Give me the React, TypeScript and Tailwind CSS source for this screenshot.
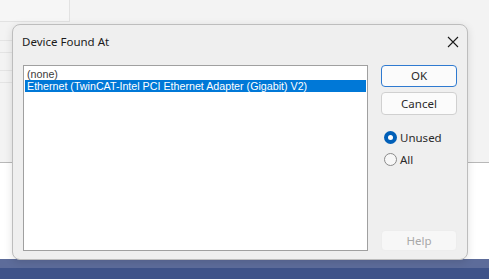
import { useState } from "react"

const devices = ["(none)", "Ethernet (TwinCAT-Intel PCI Ethernet Adapter (Gigabit) V2)"]

function Radio({ label, checked, onClick }: { label: string; checked: boolean; onClick: () => void }) {
  return (
    <button className="flex h-[13px] items-center gap-[3px] text-[11.5px] text-[#2a2a2a]" onClick={onClick}>
      {checked ? (
        <span className="flex h-[13px] w-[13px] items-center justify-center rounded-full bg-[#005fb8]">
          <span className="h-[5px] w-[5px] rounded-full bg-white" />
        </span>
      ) : (
        <span className="h-[13px] w-[13px] rounded-full border border-[#8a8a8a] bg-[#f7f7f7]" />
      )}
      <span>{label}</span>
    </button>
  )
}

export default function App() {
  const [selected, setSelected] = useState(1)
  const [filter, setFilter] = useState("unused")

  return (
    <div className="relative h-[279px] w-[489px] overflow-hidden bg-white font-['Liberation_Sans',sans-serif]">
      {/* desktop behind the dialog */}
      <div className="flex h-[163px] flex-col border-b border-[#b8b8b8] bg-[#f3f3f3]">
        <div className="h-[22px] w-[70px] border-b border-r border-[#e2e2e2] bg-[#f6f6f6]" />
        <div className="mt-[18px] h-[13px] w-[40px] border-y border-[#e4e4e4]" />
        <div className="mt-[17px] h-[13px] w-[40px] border-y border-[#e4e4e4]" />
      </div>
      <div className="absolute bottom-0 left-0 right-0 flex h-[20px] flex-col">
        <div className="h-[9px] bg-[#5d6c9a]" />
        <div className="flex-1 bg-[#3f5389]" />
      </div>

      {/* dialog */}
      <div className="absolute left-[12px] top-[24px] flex h-[236px] w-[456px] flex-col rounded-[8px] border border-[#bdbdbd] bg-[#efefef] shadow-[0_2px_8px_rgba(0,0,0,0.12)]">
        <div className="flex h-[32px] items-center justify-between pl-[9px] pr-[8px]">
          <span className="pt-[2px] font-['Noto_Sans',sans-serif] text-[11.5px] text-[#1b1b1b]">Device Found At</span>
          <svg width="12" height="12" viewBox="0 0 12 12" className="mt-[2px]">
            <path d="M1 1L11 11M11 1L1 11" stroke="#1b1b1b" strokeWidth="1.1" />
          </svg>
        </div>

        <div className="flex flex-1 gap-[13px] pb-[8px] pl-[10px] pr-[10px] pt-[9px]">
          <div className="h-[186px] w-[345px] border border-[#a0a0a0] bg-white pt-[2px] pl-[1px] pr-[1px]">
            {devices.map((d, i) => (
              <div
                key={d}
                onClick={() => setSelected(i)}
                className={`h-[12px] whitespace-nowrap pl-[2px] text-[10.7px] leading-[12px] ${
                  selected === i ? "bg-[#0078d7] text-white" : "text-[#3a3a3a]"
                }`}
              >
                {d}
              </div>
            ))}
          </div>

          <div className="flex w-[76px] flex-col font-['Noto_Sans',sans-serif]">
            <button className="h-[22px] rounded-[4px] border border-[#2f7ad0] bg-[#fbfbfb] text-[11.5px] text-[#2a2a2a]">OK</button>
            <button className="mt-[5px] h-[23px] rounded-[4px] border border-[#d0d0d0] bg-[#fbfbfb] text-[11.5px] text-[#2a2a2a]">Cancel</button>
            <div className="ml-[3px] mt-[16px] flex flex-col gap-[9px]">
              <Radio label="Unused" checked={filter === "unused"} onClick={() => setFilter("unused")} />
              <Radio label="All" checked={filter === "all"} onClick={() => setFilter("all")} />
            </div>
            <button disabled className="mt-auto h-[21px] rounded-[4px] border border-[#ededed] bg-[#f7f7f7] text-[11.5px] text-[#a8a8a8]">Help</button>
          </div>
        </div>
      </div>
    </div>
  )
}
